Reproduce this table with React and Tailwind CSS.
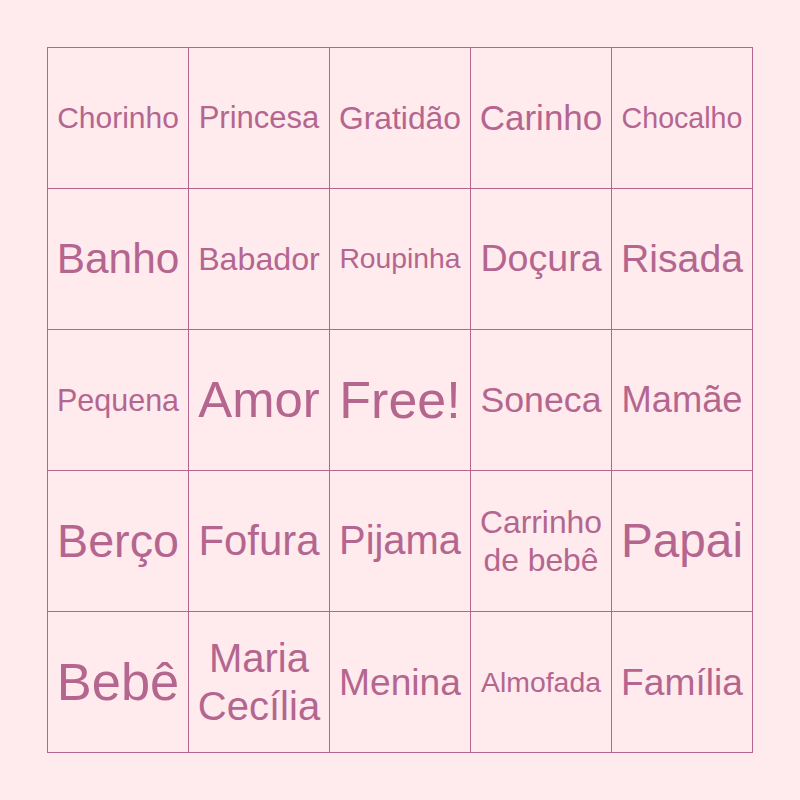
import React from "react";

// Each cell: lines of text and a font size that fits the word to the cell width
const cells = [
  [["Chorinho"], "text-[30px]"],
  [["Princesa"], "text-[31px]"],
  [["Gratidão"], "text-[31.8px]"],
  [["Carinho"], "text-[35px]"],
  [["Chocalho"], "text-[28.6px]"],

  [["Banho"], "text-[42.4px]"],
  [["Babador"], "text-[32.2px]"],
  [["Roupinha"], "text-[28.3px]"],
  [["Doçura"], "text-[37.6px]"],
  [["Risada"], "text-[39.2px]"],

  [["Pequena"], "text-[30.5px]"],
  [["Amor"], "text-[50.8px]"],
  [["Free!"], "text-[52px]"],
  [["Soneca"], "text-[35.7px]"],
  [["Mamãe"], "text-[36.3px]"],

  [["Berço"], "text-[46.7px]"],
  [["Fofura"], "text-[41.9px]"],
  [["Pijama"], "text-[39.9px]"],
  [["Carrinho", "de bebê"], "text-[31.8px]"],
  [["Papai"], "text-[47.7px]"],

  [["Bebê"], "text-[52.4px]"],
  [["Maria", "Cecília"], "text-[40px]"],
  [["Menina"], "text-[37.2px]"],
  [["Almofada"], "text-[28.4px]"],
  [["Família"], "text-[37.2px]"],
];

const App = () => {
  return (
    <div className="w-[800px] h-[800px] bg-[#ffeaee] flex items-center justify-center font-['Liberation_Sans',Arial,sans-serif] text-[#b4668f]">
      <div className="grid grid-cols-[repeat(5,141px)] grid-rows-[repeat(5,141px)] border-t border-l border-[#b4668f]">
        {cells.map(([lines, size], i) => (
          <div
            key={i}
            className={`border-r border-b border-[#b4668f] flex flex-col items-center justify-center text-center leading-[1.2] whitespace-nowrap ${size}`}
          >
            {lines.map((line) => (
              <span key={line}>{line}</span>
            ))}
          </div>
        ))}
      </div>
    </div>
  );
};

export default App;
